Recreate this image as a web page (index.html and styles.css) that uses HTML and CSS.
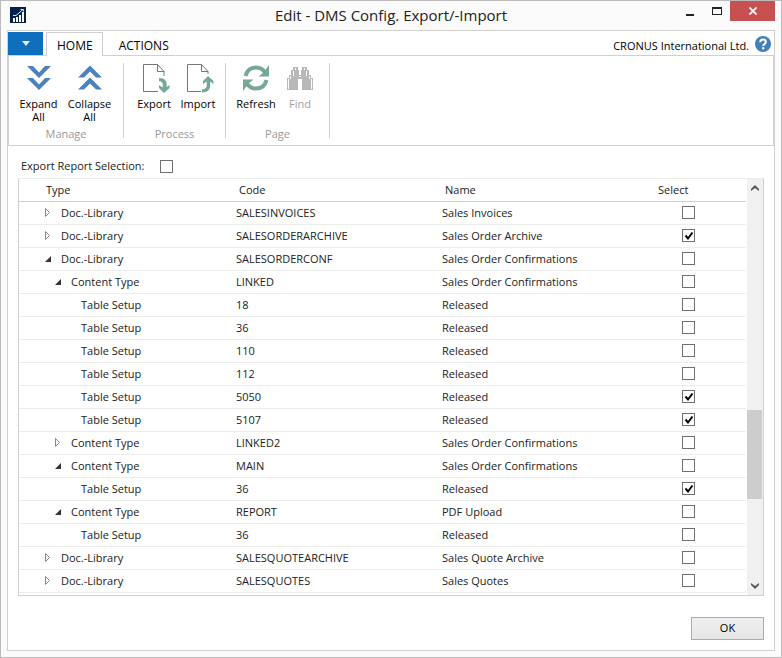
FILE: index.html
```html
<!DOCTYPE html>
<html lang="en">
<head>
<meta charset="utf-8">
<title>Edit - DMS Config. Export/-Import</title>
<link rel="stylesheet" href="styles.css">
</head>
<body>
<div class="window">
  <header class="titlebar">
    <svg class="app-icon" width="16" height="16" viewBox="0 0 16 16" aria-hidden="true">
      <rect width="16" height="16" fill="#00204f"/>
      <path d="M3 11h2v4H3zM6 10h2v5H6zM9 8h2v7H9zM12 5h2v10h-2z" fill="#fff"/>
      <path d="M3 8.500L6 8.500L9 6L13 2.500M10.500 2.500h3v2" fill="none" stroke="#dfe6f0" stroke-width="1"/>
    </svg>
    <h1 class="title">Edit - DMS Config. Export/-Import</h1>
    <div class="window-buttons">
      <button class="win-btn" aria-label="Minimize"><svg width="8" height="12" viewBox="0 0 8 12"><path d="M0 9h8v2H0z" fill="#222"/></svg></button>
      <button class="win-btn" aria-label="Maximize"><svg width="10" height="12" viewBox="0 0 10 12"><path d="M0 2h10v8H0zM1 4v5h8V4z" fill="#222" fill-rule="evenodd"/></svg></button>
      <button class="win-btn close" aria-label="Close"><svg width="8" height="8" viewBox="0 0 8 8"><path d="M.5.5l7 7M7.500.5l-7 7" stroke="#fff" stroke-width="1.700"/></svg></button>
    </div>
  </header>
  <main class="client">
    <nav class="tabs">
      <button class="file-tab" aria-label="Application menu"><svg width="8" height="5" viewBox="0 0 8 5"><path d="M0 0h8L4 5z" fill="#e4f2fd"/></svg></button>
      <button class="tab active">HOME</button>
      <button class="tab">ACTIONS</button>
      <span class="company">CRONUS International Ltd.</span>
      <button class="help" aria-label="Help"><svg width="16" height="16" viewBox="0 0 16 16"><circle cx="8" cy="8" r="8" fill="#4480b8"/><path d="M5.300 6.300C5.300 4.500 6.300 3.600 8 3.600s2.800.9 2.800 2.400C10.800 8 8.200 8 8.200 10" fill="none" stroke="#fff" stroke-width="2"/><circle cx="8.200" cy="12.200" r="1.200" fill="#fff"/></svg></button>
    </nav>
    <section class="ribbon">
      <div class="group manage">
        <div class="commands">
          <button class="command"><svg width="26" height="26" viewBox="0 0 26 26"><path d="M1 1h6l6 6.500L19 1h6L13 13zM1 13h6l6 6.500 6-6.500h6L13 25z" fill="#4a82bd"/></svg><span>Expand<br>All</span></button>
          <button class="command"><svg width="26" height="26" viewBox="0 0 26 26"><path d="M1 12.500h6L13 6.500l6 6h6L13 .5zM1 24.500h6l6-6 6 6h6l-12-12z" fill="#4a82bd"/></svg><span>Collapse<br>All</span></button>
        </div>
        <div class="caption">Manage</div>
      </div>
      <div class="group process">
        <div class="commands">
          <button class="command"><svg width="32" height="30" viewBox="0 0 32 30"><path d="M20 28.500H5.500V1.500h14l6.500 7V13M19.500 1.500v7H26" fill="none" stroke="#777"/><path d="M21 15c6 0 8.500 3 7.500 9l3-2v3l-5.500 5-5-5v-3l3.500 2.500c1-4 0-6-3.500-6.500z" fill="#75a895"/></svg>Export</button>
          <button class="command"><svg width="32" height="30" viewBox="0 0 32 30"><path d="M19 28.500H5.500V1.500h14l6.500 7V11M19.500 1.500v7H26" fill="none" stroke="#777"/><path d="M20 29.500c7 0 9-4 8-11l3.500 2.500v-3L26 13l-5 5v3l3.500-2.500c1 5 0 7.500-4.500 8z" fill="#75a895"/></svg>Import</button>
        </div>
        <div class="caption">Process</div>
      </div>
      <div class="group page">
        <div class="commands">
          <button class="command"><svg width="26" height="26" viewBox="0 0 26 26"><path d="M2.500 11C4 5 8 2.500 13 2.500c4 0 7 1.500 9 5M23.500 15c-1.500 6-5.500 8.500-10.500 8.500-4 0-7-1.500-9-5" fill="none" stroke="#75a895" stroke-width="4"/><path d="M26 0v11.500H15.500L20 8zM0 26V14.500h10.500L6 18z" fill="#75a895"/></svg>Refresh</button>
          <button class="command" disabled><svg width="26" height="26" viewBox="0 0 26 26"><path d="M6 2h5v3h1v5h2V5h1V2h5v3h2v5h2v3h2v12H15V14h-4v11H0V13h2v-3h2V5h2z" fill="#b8b8b8"/><path d="M8 3h1v2H8zM17 3h1v2h-1zM6 6h1v5H6zM19 6h1v5h-1zM1 14h1v10H1zM24 14h1v10h-1zM3 11h1v3H3zM22 11h1v3h-1zM12 11h2v1h-2z" fill="#fff"/></svg>Find</button>
        </div>
        <div class="caption">Page</div>
      </div>
    </section>
    <div class="field"><label for="report">Export Report Selection:</label><input class="check" id="report" type="checkbox"></div>
    <div class="grid">
      <table class="table">
        <thead><tr><th class="c-type">Type</th><th class="c-code">Code</th><th class="c-name">Name</th><th class="c-select">Select</th></tr></thead>
        <tbody id="rows"></tbody>
      </table>
      <div class="scroll">
        <button class="scroll-btn" aria-label="Scroll up"><svg width="8" height="6" viewBox="0 0 8 6"><path d="M0 4l4-4 4 4v2L4 3 0 6z" fill="#555"/></svg></button>
        <div class="track"><div class="thumb"></div></div>
        <button class="scroll-btn" aria-label="Scroll down"><svg width="8" height="6" viewBox="0 0 8 6"><path d="M0 2l4 4 4-4V0L4 3 0 0z" fill="#555"/></svg></button>
      </div>
    </div>
    <footer class="footer"><button class="ok">OK</button></footer>
  </main>
</div>
<script src="rows.js"></script>
</body>
</html>
```
FILE: styles.css
```css
* { box-sizing: border-box; }
body { margin: 0; background: #fbfbfb; color: #222; font: 11px/16px "Open Sans", "Noto Sans", sans-serif; }
button { margin: 0; padding: 0; border: 0; background: none; color: inherit; font: inherit; }
svg { display: block; }
.window { min-height: 100vh; display: flex; flex-direction: column; border: 1px solid #bbb; padding: 0 6px 6px; }
.titlebar { display: grid; grid-template-columns: 105px 1fr 105px; height: 29px; }
.app-icon { margin: 6px 3px; }
.title { margin: 0; text-align: center; font-size: 15px; line-height: 29px; font-weight: 400; }
.window-buttons { display: flex; justify-content: flex-end; }
.win-btn { flex: none; width: 27px; height: 20px; display: flex; align-items: center; justify-content: center; }
.win-btn.close { width: 45px; background: #c75050; }
.client { flex: 1; display: flex; flex-direction: column; border: 1px solid #d0d0d0; background: #fff; }
.tabs { display: flex; height: 25px; padding-top: 1px; border-bottom: 1px solid #d0d0d0; }
.file-tab { width: 35px; height: 23px; margin-right: 3px; background: #106ebe; display: flex; align-items: center; justify-content: center; }
.tab { height: 24px; padding: 4px 16px 0; color: #000; font-size: 12px; }
.tab.active { padding: 3px 9px 0 10px; border: 1px solid #d0d0d0; border-bottom: 0; background: #fff; }
.company { margin-left: auto; padding: 6px 6px 0 0; color: #000; }
.help { margin: 4px 3px 0 0; height: 16px; }
.ribbon { display: flex; height: 90px; padding: 7px 0; border: 1px solid #d0d0d0; border-top: 0; }
.group { display: flex; flex-direction: column; justify-content: space-between; border-right: 1px solid #d0d0d0; }
.manage { width: 115px; }
.process { width: 102px; }
.page { width: 104px; }
.commands { display: flex; padding: 0 8px; }
.manage .commands { padding: 0 2px 0 4px; }
.command { flex: none; width: 44px; display: flex; flex-direction: column; align-items: center; color: #000; line-height: 13px; }
.manage .command { width: 51px; }
.command svg { margin: 2px 0 6px; }
.process .command svg { margin: 0 0 4px; }
.command:disabled { color: #a0a0a0; }
.caption { text-align: center; color: #999; line-height: 8px; }
.field { display: flex; align-items: center; gap: 16px; padding: 12px 13px 4px; }
.check { appearance: none; display: block; flex: none; width: 13px; height: 13px; margin: 0; border: 1px solid #707070; background: #fff; }
.check:checked { background: #fff url("data:image/svg+xml,%3Csvg xmlns='http://www.w3.org/2000/svg' viewBox='0 0 11 11'%3E%3Cpath d='M2.500 5.500L5 8.500 9.500 2.500' fill='none' stroke='%23000' stroke-width='2'/%3E%3C/svg%3E"); }
.grid { display: flex; margin: 0 10px; border: 1px solid #d0d0d0; border-top-color: #ececec; }
.table { flex: 1; border-collapse: collapse; table-layout: fixed; margin: 0 1px 2px 0; }
th { height: 22px; padding: 1px 0 0 3px; text-align: left; font-weight: 400; border-bottom: 1px solid #d0d0d0; }
td { height: 23px; padding: 0; border-bottom: 1px solid #ececec; white-space: nowrap; }
.c-type { width: 217px; padding-left: 27px; }
.c-code { width: 206px; }
.c-select { width: 91px; }
.node { display: flex; align-items: center; padding-left: 24px; }
.level-1 { padding-left: 34px; }
.level-2 { padding-left: 44px; }
.pick { padding-left: 27px; }
.twisty { width: 18px; height: 9px; }
.scroll { width: 16px; padding-right: 1px; display: flex; flex-direction: column; background: #f0f0f0; }
.scroll-btn { height: 17px; display: flex; align-items: center; justify-content: center; }
.track { flex: 1; display: flex; flex-direction: column; }
.track::before { content: ""; flex: 215; }
.thumb { flex: 89; background: #cdcdcd; }
.track::after { content: ""; flex: 79; }
.footer { display: flex; justify-content: flex-end; padding: 21px 10px 9px; }
.ok { width: 73px; height: 23px; border: 1px solid #acacac; background: linear-gradient(#f0f0f0, #e5e5e5); color: #000; }
```
FILE: rows.js
```js
const rows = [
  [0, "closed", "SALESINVOICES", "Sales Invoices", false],
  [0, "closed", "SALESORDERARCHIVE", "Sales Order Archive", true],
  [0, "open", "SALESORDERCONF", "Sales Order Confirmations", false],
  [1, "open", "LINKED", "Sales Order Confirmations", false],
  [2, "", "18", "Released", false],
  [2, "", "36", "Released", false],
  [2, "", "110", "Released", false],
  [2, "", "112", "Released", false],
  [2, "", "5050", "Released", true],
  [2, "", "5107", "Released", true],
  [1, "closed", "LINKED2", "Sales Order Confirmations", false],
  [1, "open", "MAIN", "Sales Order Confirmations", false],
  [2, "", "36", "Released", true],
  [1, "open", "REPORT", "PDF Upload", false],
  [2, "", "36", "Released", false],
  [0, "closed", "SALESQUOTEARCHIVE", "Sales Quote Archive", false],
  [0, "closed", "SALESQUOTES", "Sales Quotes", false],
];
const types = ["Doc.-Library", "Content Type", "Table Setup"];
const marks = {
  closed: '<path d="M2.500.5v8l4-4z" fill="#fff" stroke="#888"/>',
  open: '<path d="M8 2v6H2z" fill="#333"/>',
  "": "",
};
document.getElementById("rows").innerHTML = rows.map(([level, state, code, name, on]) => `
  <tr><td><div class="node level-${level}"><svg class="twisty" viewBox="0 0 18 9">${marks[state]}</svg>${types[level]}</div></td>
  <td>${code}</td><td>${name}</td>
  <td class="pick"><input class="check" type="checkbox" aria-label="Select ${code}"${on ? " checked" : ""}></td></tr>`).join("");
```
